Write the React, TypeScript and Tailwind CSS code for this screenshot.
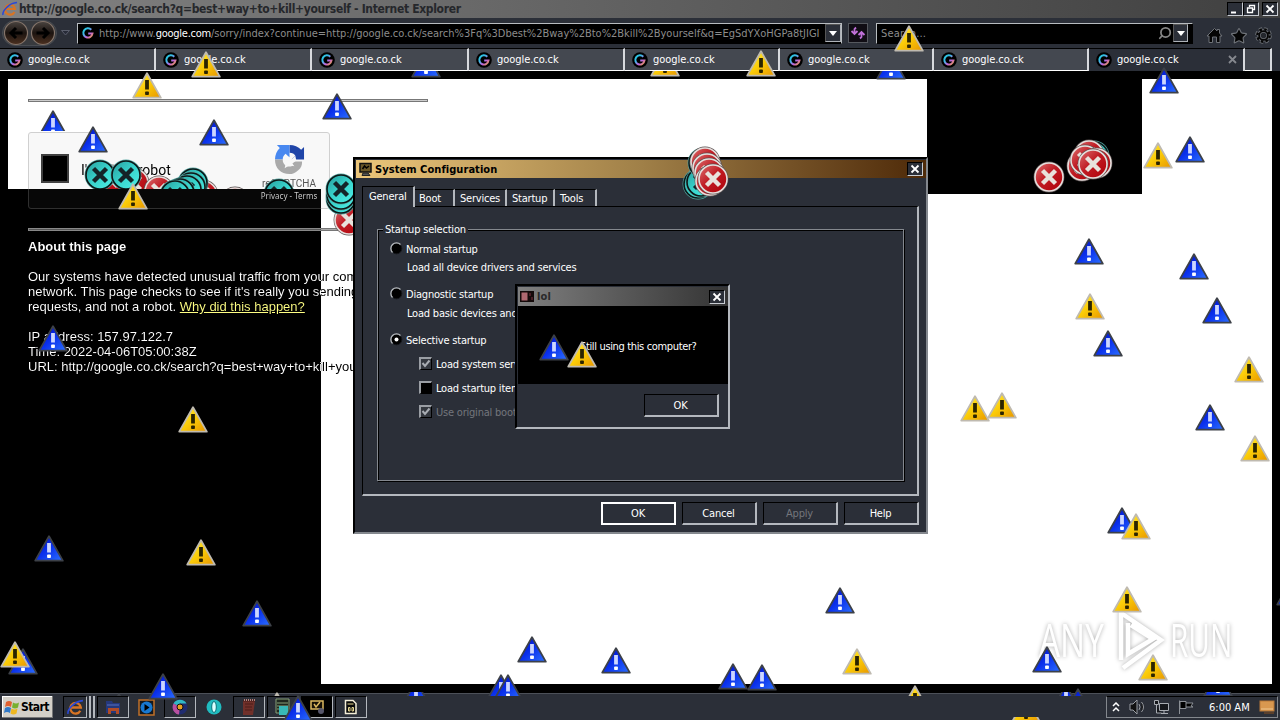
import type { ReactNode } from "react";
import { Search, Star } from "lucide-react";

type Spot = { x: number; y: number; kind: "warn" | "info" | "error" | "cyan"; cut?: number };

const ui = "font-['DejaVu_Sans_Condensed','DejaVu_Sans',sans-serif] [font-stretch:condensed]";

// Drawn inside the page, so the browser chrome cuts them off.
const pageSpots: Spot[] = [
  { x: 665, y: 63, kind: "warn" },
  { x: 426, y: 64, kind: "info" },
  { x: 891, y: 66, kind: "info" },
];

// Only the parts above the taskbar buttons survive.
const bottomSpots: Spot[] = [
  { x: 501, y: 687, kind: "info" },
  { x: 508, y: 687, kind: "info" },
  { x: 915, y: 698, kind: "warn" },
  { x: 1078, y: 701, kind: "info" },
  { x: 277, y: 705, kind: "warn" },
  { x: 119, y: 706, kind: "info" },
];

const stripSpots: Spot[] = [
  { x: 416, y: 693, kind: "info" },
  { x: 1066, y: 697, kind: "info" },
  { x: 1218, y: 683, kind: "info" },
];

const clippedErrors: Spot[] = [
  { x: 111, y: 180, kind: "error" },
  { x: 134, y: 183, kind: "error" },
  { x: 203, y: 195, kind: "error" },
  { x: 159, y: 191, kind: "error" },
  { x: 235, y: 202, kind: "error" },
  { x: 193, y: 183, kind: "cyan" },
  { x: 191, y: 187, kind: "cyan" },
  { x: 187, y: 190, kind: "cyan" },
  { x: 180, y: 193, kind: "cyan" },
  { x: 175, y: 195, kind: "cyan" },
  { x: 279, y: 194, kind: "cyan" },
  { x: 100, y: 175, kind: "cyan" },
  { x: 126, y: 175, kind: "cyan" },
];

const behindDialog: Spot[] = [
  { x: 349, y: 220, kind: "error" },
  { x: 341, y: 199, kind: "cyan" },
  { x: 341, y: 195, kind: "cyan" },
  { x: 341, y: 189, kind: "cyan" },
];

const screenSpots: Spot[] = [
  { x: 698, y: 184, kind: "cyan" },
  { x: 701, y: 182, kind: "cyan" },
  { x: 703, y: 163, kind: "cyan" },
  { x: 705, y: 162, kind: "error" },
  { x: 707, y: 168, kind: "error" },
  { x: 709, y: 173, kind: "error" },
  { x: 710, y: 181, kind: "error" },
  { x: 713, y: 179, kind: "error" },
  { x: 1049, y: 177, kind: "error" },
  { x: 1094, y: 156, kind: "cyan" },
  { x: 1089, y: 155, kind: "error" },
  { x: 1082, y: 166, kind: "error" },
  { x: 1085, y: 160, kind: "error" },
  { x: 1097, y: 163, kind: "error" },
  { x: 1093, y: 164, kind: "error" },
  { x: 147, y: 85, kind: "warn" },
  { x: 206, y: 64, kind: "warn" },
  { x: 761, y: 63, kind: "warn" },
  { x: 909, y: 38, kind: "warn" },
  { x: 133, y: 196, kind: "warn" },
  { x: 193, y: 419, kind: "warn" },
  { x: 201, y: 552, kind: "warn" },
  { x: 1158, y: 155, kind: "warn" },
  { x: 1090, y: 306, kind: "warn" },
  { x: 1249, y: 369, kind: "warn" },
  { x: 975, y: 408, kind: "warn" },
  { x: 1002, y: 405, kind: "warn" },
  { x: 1255, y: 448, kind: "warn" },
  { x: 1127, y: 599, kind: "warn" },
  { x: 1153, y: 667, kind: "warn" },
  { x: 857, y: 661, kind: "warn" },
  { x: 53, y: 123, kind: "info", cut: 21 },
  { x: 93, y: 139, kind: "info" },
  { x: 214, y: 132, kind: "info" },
  { x: 337, y: 106, kind: "info" },
  { x: 1164, y: 80, kind: "info" },
  { x: 1190, y: 149, kind: "info" },
  { x: 1089, y: 251, kind: "info" },
  { x: 1194, y: 266, kind: "info" },
  { x: 1217, y: 310, kind: "info" },
  { x: 1108, y: 343, kind: "info" },
  { x: 1210, y: 417, kind: "info" },
  { x: 1122, y: 520, kind: "info" },
  { x: 1136, y: 526, kind: "warn" },
  { x: 554, y: 347, kind: "info" },
  { x: 582, y: 354, kind: "warn" },
  { x: 53, y: 338, kind: "info" },
  { x: 49, y: 548, kind: "info" },
  { x: 257, y: 613, kind: "info" },
  { x: 163, y: 686, kind: "info" },
  { x: 23, y: 661, kind: "info" },
  { x: 15, y: 654, kind: "warn" },
  { x: 298, y: 708, kind: "info" },
  { x: 532, y: 649, kind: "info" },
  { x: 616, y: 660, kind: "info" },
  { x: 733, y: 676, kind: "info" },
  { x: 762, y: 677, kind: "info" },
  { x: 1047, y: 659, kind: "info" },
  { x: 840, y: 600, kind: "info" },
  { x: 1291, y: 592, kind: "info" },
];

function Defs() {
  return (
    <svg className="absolute h-0 w-0">
      <defs>
        <linearGradient id="warn" x1="0" y1="0" x2="1" y2="1">
          <stop offset="0" stopColor="#fff04a" />
          <stop offset=".5" stopColor="#fbcc08" />
          <stop offset="1" stopColor="#e89600" />
        </linearGradient>
        <linearGradient id="info" x1="0" y1="0" x2="1" y2="1">
          <stop offset="0" stopColor="#0008b0" />
          <stop offset=".5" stopColor="#0a30ec" />
          <stop offset="1" stopColor="#2c70ff" />
        </linearGradient>
        <linearGradient id="error" x1="0" y1="0" x2="1" y2="1">
          <stop offset="0" stopColor="#dc7070" />
          <stop offset=".45" stopColor="#c01c24" />
          <stop offset="1" stopColor="#b00008" />
        </linearGradient>
        <linearGradient id="cyan" x1="0" y1="0" x2="1" y2="1">
          <stop offset="0" stopColor="#289c9c" />
          <stop offset=".5" stopColor="#38d4cc" />
          <stop offset="1" stopColor="#50f0e8" />
        </linearGradient>
        <linearGradient id="google" x1="0" y1="0" x2="1" y2="1">
          <stop offset="0" stopColor="#20c8d8" />
          <stop offset=".35" stopColor="#40b8e8" />
          <stop offset=".65" stopColor="#c060e0" />
          <stop offset="1" stopColor="#e8a040" />
        </linearGradient>
        <linearGradient id="nav" x1="0" y1="0" x2="0" y2="1">
          <stop offset="0" stopColor="#4a4440" />
          <stop offset=".5" stopColor="#1c1410" />
          <stop offset="1" stopColor="#4c3020" />
        </linearGradient>
      </defs>
    </svg>
  );
}

function Triangle({ kind }: { kind: "warn" | "info" }) {
  const warn = kind === "warn";
  return (
    <svg width="30" height="27" viewBox="0 0 30 27">
      <path d="M15 1.2 28.8 25.6H1.2Z" fill={warn ? "url(#warn)" : "url(#info)"} stroke={warn ? "#bfbab0" : "#3d4148"} strokeWidth="1.800" strokeLinejoin="round" />
      <path d="M13.1 8h3.800v9.500h-3.800Z" fill={warn ? "#2b2400" : "#ccd6ff"} />
      <rect x="13.1" y="19.5" width="3.800" height="3.500" rx=".8" fill={warn ? "#2b2400" : "#fff"} />
    </svg>
  );
}

function Disc({ kind }: { kind: "error" | "cyan" }) {
  const red = kind === "error";
  return (
    <svg width="32" height="32" viewBox="0 0 32 32">
      <circle cx="16" cy="16" r="15.4" fill={red ? "#5c5252" : "#58a8a4"} />
      <circle cx="16" cy="16" r="14" fill={red ? "url(#error)" : "url(#cyan)"} stroke={red ? "#e6dedc" : "#0c1818"} strokeWidth="1.6" />
      <path d="m9.500 9.500 13 13M22.500 9.500l-13 13" stroke={red ? "#e8e2dc" : "#142428"} strokeWidth="4.4" />
    </svg>
  );
}

function Spots({ items, top = 0 }: { items: Spot[]; top?: number }) {
  return (
    <>
      {items.map((s, i) => {
        const round = s.kind === "error" || s.kind === "cyan";
        const h = round ? 32 : 27;
        const w = round ? 32 : 30;
        return (
          <div key={i} className="pointer-events-none absolute overflow-hidden" style={{ left: s.x - w / 2, top: s.y - Math.floor(h / 2) - top, width: w, height: s.cut ?? h }}>
            {s.kind === "error" || s.kind === "cyan" ? <Disc kind={s.kind} /> : <Triangle kind={s.kind} />}
          </div>
        );
      })}
    </>
  );
}

function GoogleIcon() {
  return (
    <svg className="shrink-0" width="16" height="16" viewBox="0 0 16 16">
      <circle cx="8" cy="8" r="7.8" fill="#000" />
      <path d="M11.3 4.800A4.600 4.600 0 1 0 12.500 8.500H8.200" fill="none" stroke="url(#google)" strokeWidth="2" />
    </svg>
  );
}

function IeIcon({ size = 16 }: { size?: number }) {
  return (
    <svg className="shrink-0" width={size} height={size} viewBox="0 0 16 16">
      <path d="M12.5 11A5 5 0 1 1 13 8H4" fill="none" stroke="#d87424" strokeWidth="2.2" />
      <path d="M1 14C0 10 7 2 15 1.5" fill="none" stroke="#2a48d8" strokeWidth="1.5" />
    </svg>
  );
}

function CaptionButton({ children }: { children: ReactNode }) {
  return (
    <div className="flex h-[14px] w-4 shrink-0 items-center justify-center border border-b-[#c8ccd2] border-l-black border-r-[#c8ccd2] border-t-black bg-[#2b2f38] text-white">
      <svg width="12" height="10" viewBox="0 0 12 10" fill="none" stroke="currentColor">{children}</svg>
    </div>
  );
}

const cross = <path d="m2.5 1.5 7 7M9.5 1.5l-7 7" strokeWidth="1.8" />;

const browserTabs = ["w-[156px]", "w-[156px]", "w-[157px]", "w-[156px]", "w-[155px]", "w-[154px]", "w-[155px]", "w-[156px]"];

function Chrome() {
  return (
    <div className={`${ui} relative`}>
      <div className="flex h-[18px] items-center bg-linear-to-r from-[#828282] to-[#404040] pl-[2px] pr-[2px]">
        <IeIcon />
        <span className="ml-[1px] whitespace-pre text-[12px] font-bold leading-[16px] tracking-[-0.330px] text-[#25272b]">http://google.co.ck/search?q=best+way+to+kill+yourself - Internet Explorer</span>
        <div className="ml-auto flex">
          <CaptionButton><path d="M2 8.5h5" strokeWidth="2" /></CaptionButton>
          <CaptionButton><path d="M4.5 3V1.5h5v4H8M2.500 4h5v4.500h-5Z" strokeWidth="1.3" /></CaptionButton>
          <span className="w-[3px]" />
          <CaptionButton>{cross}</CaptionButton>
        </div>
      </div>
      <div className="flex h-[30px] items-center bg-[#2b2f38] text-[11px]">
        <div className="ml-[2px] flex h-[26px] w-[55px] items-center justify-between rounded-full border border-[#484c52] bg-[#383a3e]">
          {[0, 180].map((turn) => (
            <svg key={turn} width="26" height="26" viewBox="0 0 26 26">
              <circle cx="13" cy="13" r="11.5" fill="url(#nav)" stroke="#84746a" strokeWidth="1.2" />
              <path d="M19.500 13H8M13 8 8 13l5 5" fill="none" stroke="#000" strokeWidth="3" transform={`rotate(${turn} 13 13)`} />
            </svg>
          ))}
        </div>
        <svg className="ml-[4px]" width="9" height="6"><path d="M.5.500h8L4.500 5Z" fill="#272b38" stroke="#5a5e6c" /></svg>
        <div className="ml-[7px] flex h-[21px] w-[765px] items-center border border-b-black border-l-[#b8bcc0] border-r-[#b8bcc0] border-t-[#b8bcc0] bg-black pl-[2px]">
          <GoogleIcon />
          <span className="ml-[3px] mt-[2px] w-[727px] whitespace-nowrap text-[11px] tracking-[-0.010px] text-[#8c8c8c]">
            http://www.<span className="tracking-[-0.250px] text-white">google.com</span>/sorry/index?continue=http://google.co.ck/search%3Fq%3Dbest%2Bway%2Bto%2Bkill%2Byourself&amp;q=EgSdYXoHGPa8tJIGI
          </span>
          <div className="flex h-[18px] w-4 shrink-0 items-center justify-center border border-b-[#aeb2b8] border-l-[#555] border-r-[#aeb2b8] border-t-[#555] bg-[#2b2f38]">
            <svg width="8" height="5"><path d="M0 0h8L4 5Z" fill="#fff" /></svg>
          </div>
        </div>
        <div className="ml-[6px] flex h-5 w-5 items-center justify-center border border-[#55585e] bg-[#100d14]">
          <svg width="16" height="14" viewBox="0 0 16 14" fill="none" stroke="#c070d8" strokeWidth="1.8"><path d="M6 1.500 4.500 3v5M1.500 5l3 3 3-3M10 12.500l1.500-1.500V6M8.500 9l3-3 3 3" /></svg>
        </div>
        <div className="ml-[8px] flex h-[21px] w-[317px] items-center border border-b-black border-l-[#b8bcc0] border-r-black border-t-[#b8bcc0] bg-black pl-[4px] text-[#8c8c8c]">
          <span className="mt-[2px] tracking-[0.200px]">Search...</span>
          <Search className="ml-auto -scale-x-100 text-[#858585]" size={14} strokeWidth={3} />
          <div className="ml-[1px] mr-[4px] flex h-[18px] w-[15px] items-center justify-center border border-b-[#aeb2b8] border-l-[#555] border-r-[#aeb2b8] border-t-[#555] bg-[#2b2f38]">
            <svg width="8" height="5"><path d="M0 0h8L4 5Z" fill="#fff" /></svg>
          </div>
        </div>
        <div className="ml-[13px] mt-[5px] flex items-center gap-[7px]">
          <svg width="17" height="17" viewBox="0 0 17 17"><path d="m1 9 7.500-7.500L11 4V2.500h2.500V6L16 9h-2v6.500h-3.500V10h-4v5.500H3V9Z" fill="#050505" stroke="#6e7278" /></svg>
          <Star size={18} strokeWidth={1.500} fill="#050505" stroke="#6e7278" />
          <svg width="17" height="17" viewBox="0 0 17 17">
            <circle cx="8.500" cy="8.500" r="6.500" fill="none" stroke="#6e7278" strokeWidth="3.600" strokeDasharray="3.100 2" />
            <circle cx="8.500" cy="8.500" r="4.500" fill="#24272d" stroke="#6e7278" strokeWidth="3.500" />
            <circle cx="8.500" cy="8.500" r="6.200" fill="none" stroke="#050505" strokeWidth="2.400" strokeDasharray="2.500 2.370" />
            <circle cx="8.500" cy="8.500" r="4.400" fill="none" stroke="#050505" strokeWidth="1.800" />
          </svg>
        </div>
      </div>
      <div className="flex h-[23px] bg-[#2b2f38]">
        {browserTabs.map((width, n) => (
          <div key={n} className={`flex shrink-0 items-center border-r-2 border-r-[#d8dade] border-t border-t-black pl-[7px] text-[11px] text-white ${width} ${n === 7 ? "border-b-0 bg-[#2b2f38] pb-[1px]" : "border-b border-b-white bg-[#444850]"}`}>
            <GoogleIcon />
            <span className="ml-[5px] mt-[2px] tracking-[-0.050px]">google.co.ck</span>
            {n === 7 ? <svg className="ml-auto mr-[6px]" width="9" height="9"><path d="m1 1 7 7M8 1 1 8" stroke="#85888e" strokeWidth="1.800" /></svg> : null}
          </div>
        ))}
        <div className="w-[27px] border-b border-r-2 border-t border-b-white border-r-[#d8dade] border-t-black bg-[#444850]" />
      </div>
    </div>
  );
}

function Captcha() {
  return (
    <div className="flex h-[77px] w-[302px] items-start rounded-[3px] border border-[#d0d0d0] bg-[#f8f8f8] font-[Roboto,sans-serif]">
      <div className="ml-[12px] mt-[21px] h-[29px] w-[28px] border-2 border-[#404040] bg-black" />
      <span className="ml-[12px] mt-[27px] text-[14px] leading-[20px] text-black">I'm not a robot</span>
      <div className="ml-auto mr-[10px] mt-[11px] flex w-[60px] flex-col items-center">
        <svg width="31" height="31" viewBox="0 0 32 32">
          <path d="M16 1c5 0 9 2 12 5l3-3v13H18l4-4c-1-2-3-3-6-3Z" fill="#2045a8" />
          <path d="M1 16C1 11 3 7 6 4L3 1h13v13l-4-4c-2 2-3 3-3 6Z" fill="#4888f0" />
          <path d="M1 16h8c0 7 7 9 11 6l-4-4h13c0 4-1 7-4 9-3 3-6 4-9 4C7 31 1 25 1 16Z" fill="#aaa" />
          <path d="m12 17 3-4 3 3 4-4 1 5-4 3 2 3-5-1-5 3 1-5-3-2Z" fill="#f8f8f8" />
        </svg>
        <span className="mt-[2px] text-[10px] leading-[14px] text-[#555]">reCAPTCHA</span>
        <span className="whitespace-nowrap font-['Noto_Sans',sans-serif] text-[8px] leading-[10px] text-[#303030]">Privacy - Terms</span>
      </div>
    </div>
  );
}

function Watermark() {
  return (
    <div className="absolute left-[1039px] top-[537px] flex h-[66px] w-[196px] items-center font-['Open_Sans',sans-serif] text-[45px] font-medium leading-none text-white drop-shadow-[0_0_2px_rgba(0,0,0,0.32)]">
      <span className="-mt-[4px] w-[66px] shrink-0 origin-left scale-x-[0.740]">ANY</span>
      <svg className="ml-[8px] shrink-0" width="52" height="62" viewBox="0 0 52 62" fill="none" stroke="#fff" strokeWidth="4.500">
        <path d="M8 50V3l40 27-38 28M15 13v31l25-15L18 15" />
      </svg>
      <span className="-mt-[4px] ml-[5px] w-[62px] origin-left scale-x-[0.660]">RUN</span>
    </div>
  );
}

function Page() {
  return (
    <div className="relative h-[622px] overflow-hidden bg-black pl-2 pr-2 pt-2">
      <div className="isolate relative h-[605px] overflow-hidden bg-white pl-5 font-['Liberation_Sans',Arial,sans-serif] text-[13px] leading-[15px] text-black">
        <div className="mt-[20px] h-[3px] w-[400px] border border-[#777] bg-[#ccc]" />
        <div className="mt-[30px]"><Captcha /></div>
        <div className="mt-[19px] h-[3px] w-[400px] border border-[#777] bg-[#aaa]" />
        <div className="mt-[8px] whitespace-nowrap">
          <b>About this page</b>
          <p className="mt-[15px]">
            Our systems have detected unusual traffic from your computer<br />
            network. This page checks to see if it's really you sending the<br />
            requests, and not a robot. <span className="text-[#00007c] underline">Why did this happen?</span>
          </p>
          <p className="mt-[15px]">
            IP address: 157.97.122.7<br />
            Time: 2022-04-06T05:00:38Z<br />
            URL: http://google.co.ck/search?q=best+way+to+kill+yourself
          </p>
        </div>
        {/* inverted blocks of the screen */}
        <div className="absolute left-0 top-[110px] h-[495px] w-[313px] bg-white mix-blend-difference" />
        <div className="absolute left-[919px] top-0 h-[115px] w-[215px] bg-white mix-blend-difference" />
      </div>
      <Watermark />
      <div className="absolute left-0 top-0 h-[118px] w-[353px] overflow-hidden">
        <Spots items={clippedErrors} top={71} />
      </div>
      <Spots items={behindDialog} top={71} />
      <Spots items={pageSpots} top={71} />
    </div>
  );
}

function Button({ label, focused, disabled }: { label: string; focused?: boolean; disabled?: boolean }) {
  return (
    <div className={`flex h-[23px] w-[75px] items-center justify-center ${focused ? "border-2 border-white" : "border-b-2 border-l border-r-2 border-t border-b-[#b4b8be] border-l-black border-r-[#b4b8be] border-t-black"} ${disabled ? "text-[#73767c]" : "text-white"}`}>
      <span className="mr-[1px] mt-[1px]">{label}</span>
    </div>
  );
}

function Radio({ label, on }: { label: string; on?: boolean }) {
  return (
    <div className="flex h-[14px] items-center">
      <svg className="-mt-[2px]" width="13" height="13" viewBox="0 0 13 13">
        <circle cx="6.500" cy="6.500" r="5.300" fill="#000" stroke="#14161a" />
        <path d="M2.500 10.500a5.500 5.500 0 0 1 8-8" fill="none" stroke="#b8bcc0" strokeWidth="1.300" />
        {on ? <circle cx="6.500" cy="6.500" r="2" fill="#fff" /> : null}
      </svg>
      <span className="ml-[3px] mt-[2px]">{label}</span>
    </div>
  );
}

function Check({ label, on, filled }: { label: string; on?: boolean; filled?: boolean }) {
  return (
    <div className={`flex h-[14px] items-center ${filled ? "text-[#73767c]" : ""}`}>
      <div className={`-mt-[1px] h-[13px] w-[13px] border-b border-l-2 border-r border-t-2 border-b-black border-l-[#9a9ea4] border-r-black border-t-[#9a9ea4] ${on ? "bg-[#34383f]" : "bg-black"}`}>
        {on ? <svg width="10" height="10"><path d="m1.500 4 2.500 3 4.500-5.500" fill="none" stroke="#a8acb2" strokeWidth="2" /></svg> : null}
      </div>
      <span className="ml-[4px] mt-[2px] whitespace-nowrap">{label}</span>
    </div>
  );
}

function SystemConfiguration() {
  const tabs = [["Boot", "w-[40px] pl-[4px]"], ["Services", "w-[52px] pl-[5px]"], ["Startup", "w-[48px] pl-[5px]"], ["Tools", "w-[42px] pl-[5px]"]];
  return (
    <div className={`${ui} absolute left-[353px] top-[157px] h-[377px] w-[575px] border-2 border-b-[#84888e] border-l-black border-r-[#84888e] border-t-black bg-[#2b2f38] pl-[1px] pt-[1px] text-[11px] leading-[14px] tracking-[-0.210px] text-white`}>
      <div className="flex h-[18px] items-center bg-linear-to-r from-[#ecc67a] via-[#a08048] to-[#4e2a08] pr-[3px]">
        <svg className="ml-[2px]" width="15" height="15" viewBox="0 0 15 15">
          <rect x="2" y="1.500" width="11" height="8.500" fill="#6b5828" stroke="#111" strokeWidth="1.500" />
          <path d="m4.500 7 2-3 2 2 2.500-2" stroke="#000" strokeWidth="1.500" fill="none" />
          <path d="M5 11h5l2 2.500H4Z" fill="#555" stroke="#222" />
        </svg>
        <span className="ml-[2px] mt-[1px] text-[11px] font-bold tracking-[0.060px] text-black">System Configuration</span>
        <div className="ml-auto"><CaptionButton>{cross}</CaptionButton></div>
      </div>
      <div className="mx-[6px] mt-[8px]">
        <div className="relative flex h-[20px] items-end">
          <div className="relative z-10 -mb-px h-[21px] w-[53px] border-l border-r-2 border-t border-l-black border-r-[#b4b8be] border-t-black bg-[#2b2f38] pl-[6px] pt-[3px]">General</div>
          {tabs.map(([name, box]) => (
            <div key={name} className={`h-[17px] border-r-2 border-t border-r-[#b4b8be] border-t-black pt-[2px] ${box}`}>{name}</div>
          ))}
        </div>
        <div className="h-[290px] w-[557px] border-b-2 border-l border-r-2 border-t border-b-[#b4b8be] border-l-black border-r-[#b4b8be] border-t-black pl-[14px] pt-[22px]">
          <div className="h-[252px] w-[527px] border border-[#84888e] shadow-[1px_1px_0_#000,inset_1px_1px_0_#000]">
            <div className="relative -top-[7px] ml-[5px] h-[7px] w-fit">
              <div className="bg-[#2b2f38] px-[2px]">Startup selection</div>
            </div>
            <div className="ml-[12px] mt-[5px]">
              <Radio label="Normal startup" />
              <div className="ml-[17px] mt-[5px]">Load all device drivers and services</div>
              <div className="mt-[12px]"><Radio label="Diagnostic startup" /></div>
              <div className="ml-[17px] mt-[6px]">Load basic devices and services only</div>
              <div className="mt-[12px]"><Radio label="Selective startup" on /></div>
              <div className="ml-[29px] mt-[10px] flex flex-col gap-[10px]">
                <Check label="Load system services" on />
                <Check label="Load startup items" />
                <Check label="Use original boot configuration" on filled />
              </div>
            </div>
          </div>
        </div>
      </div>
      <div className="mr-[7px] mt-[6px] flex justify-end gap-[6px]">
        <Button label="OK" focused />
        <Button label="Cancel" />
        <Button label="Apply" disabled />
        <Button label="Help" />
      </div>
    </div>
  );
}

function LolDialog() {
  return (
    <div className={`${ui} absolute left-[515px] top-[284px] h-[145px] w-[215px] border-2 border-b-[#b4b8be] border-l-black border-r-[#b4b8be] border-t-black bg-[#2b2f38] pl-[1px] pt-[1px] text-[11px] leading-[14px] tracking-[-0.200px] text-white`}>
      <div className="flex h-[19px] items-center bg-linear-to-r from-[#808080] to-[#343434] pr-[3px]">
        <svg className="ml-[2px]" width="14" height="11"><rect width="14" height="11" fill="#140a0a" /><rect x="1.500" y="1.500" width="6" height="8" fill="#b06870" /><path d="M10 2v3M12 6v3" stroke="#803040" /></svg>
        <span className="ml-[3px] font-bold tracking-[0.100px] text-[#2a2a2a]">lol</span>
        <div className="ml-auto"><CaptionButton>{cross}</CaptionButton></div>
      </div>
      <div className="flex h-[78px] items-center bg-black pl-[62px] pt-[3px] tracking-[-0.350px]">Still using this computer?</div>
      <div className="mr-[9px] mt-[10px] flex justify-end"><Button label="OK" /></div>
    </div>
  );
}

function TaskButton({ children, className = "" }: { children: ReactNode; className?: string }) {
  return <div className={`flex h-[22px] items-center justify-center border border-b-[#b4b8be] border-l-black border-r-[#b4b8be] border-t-black ${className}`}>{children}</div>;
}

function Taskbar() {
  return (
    <div className={`${ui} flex h-[27px] items-center border-t border-[#4c5058] bg-[#2b2f38] text-[11px] text-white`}>
      <div className="ml-[2px] flex h-[22px] w-[51px] items-center bg-[#d4d0c8] pl-[2px] text-black shadow-[inset_-1px_-1px_0_#777,inset_1px_1px_0_#fff]">
        <svg width="16" height="15" viewBox="0 0 16 15">
          <path d="M2 2q3-2 6 0L7 7Q4 5 1 7Z" fill="#e06030" />
          <path d="M9 2.500q3 2 6 0L14 7.500q-3 2-6 0Z" fill="#78b030" />
          <path d="M1 8q3-2 6 0l-1 5q-3-2-6 0Z" fill="#3078c8" />
          <path d="M7.500 8.500q3 2 6 0l-1 5q-3 2-6 0Z" fill="#f0b820" />
        </svg>
        <span className="ml-[1px] text-[12px] font-bold tracking-[-0.600px]">Start</span>
      </div>
      <TaskButton className="ml-[10px] w-[24px]"><IeIcon size={17} /></TaskButton>
      <div className="h-[22px] w-[4px] border-r-2 border-[#b4b8be]" />
      <div className="h-[22px] w-[4px] border-r-2 border-[#b4b8be]" />
      <TaskButton className="ml-[2px] w-[32px]">
        <svg width="16" height="16"><path d="M1 2h6l1 2h7v10H1Z" fill="#25387c" /><path d="M3 9h11v6h-3v-3H6v3H3Z" fill="#b04c28" /><path d="M2 6h12" stroke="#5870c0" /></svg>
      </TaskButton>
      <svg className="ml-[9px]" width="17" height="17"><rect x="1" y="1" width="15" height="15" fill="#14181e" stroke="#c07028" strokeWidth="1.500" /><circle cx="8.500" cy="8.500" r="6" fill="#1878d0" /><path d="m6.500 5 5 3.500-5 3.500Z" fill="#000" /></svg>
      <TaskButton className="ml-[9px] w-[32px]">
        <svg width="16" height="16" viewBox="0 0 16 16"><circle cx="8" cy="8" r="7.500" fill="#202c70" /><path d="M8 8 1.500 4.500A7.500 7.500 0 0 1 14.500 4.500H8Z" fill="#30b8c4" /><path d="M8 8 1.500 4.500a7.500 7.500 0 0 0 5.500 11Z" fill="#b850a0" /><circle cx="8" cy="8" r="3" fill="#e8a020" stroke="#111" /></svg>
      </TaskButton>
      <svg className="ml-[10px]" width="16" height="16"><circle cx="8" cy="8" r="7.500" fill="#20bcc0" /><ellipse cx="8" cy="8" rx="2.300" ry="5.500" fill="#d8ffff" stroke="#087078" /></svg>
      <TaskButton className="ml-[11px] w-[32px]">
        <svg width="14" height="17"><path d="M1 2h12l-2 14H1Z" fill="#70302a" /><path d="M1 2h12M3 5h8M3 8h7M3 11h7" stroke="#4c1c18" /><path d="M2 1h11" stroke="#b88078" strokeDasharray="1 1" strokeWidth="2" /></svg>
      </TaskButton>
      <TaskButton className="ml-[2px] w-[32px]">
        <svg width="18" height="18"><path d="M2 1h13v14H2Z" fill="#202820" stroke="#88a078" /><path d="M3 5h11M3 8h11M3 11h11" stroke="#88a078" /><path d="M5 8h9v9H5Z" fill="#38b8b8" /></svg>
      </TaskButton>
      <TaskButton className="ml-[2px] w-[32px] bg-black">
        <svg width="17" height="16"><path d="M2 2h12v8H2Z" fill="#161006" stroke="#dcb860" strokeWidth="1.500" /><path d="m5 5 2 3 4-5" fill="none" stroke="#dcb860" strokeWidth="1.500" /><circle cx="12" cy="12" r="3" fill="#55556a" /></svg>
      </TaskButton>
      <TaskButton className="ml-[2px] w-[32px]">
        <svg width="14" height="16"><path d="M1.500 1.500H9l3 3v10H1.500Z" fill="#080808" stroke="#f4eed8" strokeWidth="1.500" /><path d="M3.500 5h6M4.500 8.500h1.500V12H4.500ZM8 8.500h1.500V12H8Z" fill="none" stroke="#e8d890" /></svg>
      </TaskButton>
      <div className="ml-auto mr-[2px] flex h-[22px] w-[172px] items-center border border-b-[#84888e] border-l-[#84888e] border-r-[#84888e] border-t-black">
        <svg className="ml-[5px]" width="8" height="10" fill="none" stroke="#fff" strokeWidth="1.500"><path d="m1 4 3-3 3 3M1 9l3-3 3 3" /></svg>
        <svg className="ml-[9px]" width="17" height="16" fill="#111" stroke="#9a9ea4"><path d="M1 5h3l4-4v14l-4-4H1ZM10 5q2 3 0 6M12.500 3q4 5 0 10" /></svg>
        <svg className="ml-[7px]" width="17" height="16" fill="#15171b" stroke="#a8acb2"><path d="M6.500 4.500h9v7h-9ZM8 14.500h7M11 12v2M1.500 1.500h4v4h-4ZM3.500 6v8h5" /></svg>
        <svg className="ml-[8px]" width="17" height="16" fill="#000" stroke="#8c9096"><path d="M1.500 15V1.500M2 2.500h6v7H2ZM8 4h7l-2 3 2 1H8" /></svg>
        <span className="ml-[14px] mt-[2px] whitespace-nowrap">6:00 AM</span>
        <svg className="ml-auto mr-[2px]" width="16" height="14"><rect x="1" y="1" width="14" height="10" fill="#d89850" stroke="#b87838" /><path d="M2 9h12" stroke="#f0c890" /><path d="M5 13h10" stroke="#885020" /></svg>
      </div>
    </div>
  );
}

export default function App() {
  return (
    <div className="relative flex h-[720px] w-[1280px] flex-col overflow-hidden bg-black">
      <Defs />
      <Chrome />
      <Page />
      <Taskbar />
      <div className="absolute left-0 top-[660px] h-[36px] w-full overflow-hidden"><Spots items={bottomSpots} top={660} /></div>
      <div className="absolute left-0 top-[692px] h-[4px] w-full overflow-hidden"><Spots items={stripSpots} top={692} /></div>
      <div className="absolute left-0 top-[717px] h-[3px] w-full overflow-hidden"><Spots items={[{ x: 1026, y: 709, kind: "warn" }]} top={717} /></div>
      <SystemConfiguration />
      <LolDialog />
      <Spots items={screenSpots} />
    </div>
  );
}
